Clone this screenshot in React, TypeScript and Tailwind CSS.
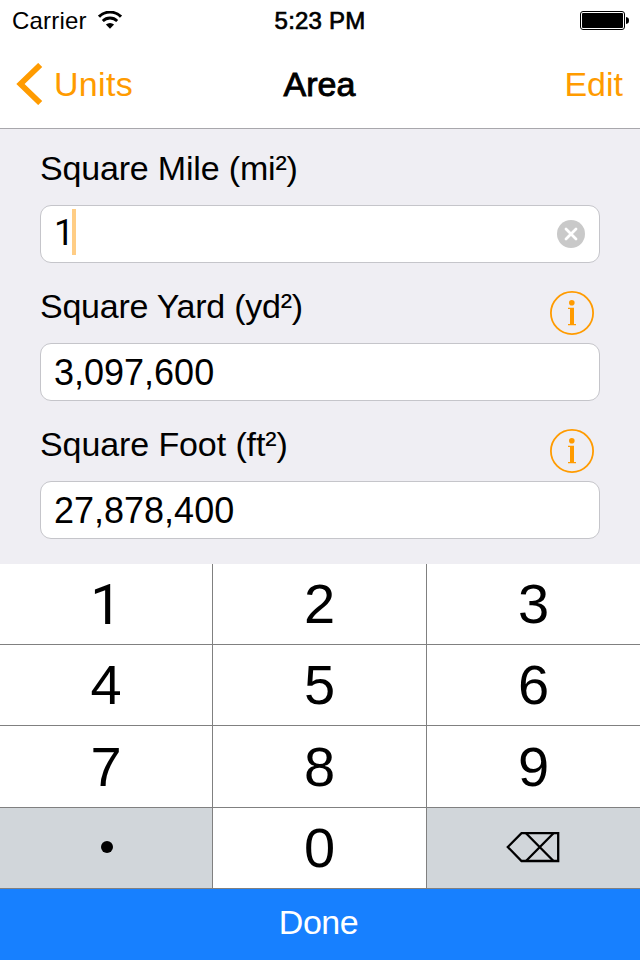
import React from "react";

type Conversion = { name: string; unit: string; value: string; spacing: string; active?: boolean };

const conversions: Conversion[] = [
  { name: "Square Mile", unit: "mi", value: "1", spacing: "tracking-[-0.18px]", active: true },
  { name: "Square Yard", unit: "yd", value: "3,097,600", spacing: "tracking-[-0.25px]" },
  { name: "Square Foot", unit: "ft", value: "27,878,400", spacing: "tracking-[-0.1px]" },
];

function Wifi() {
  return (
    <svg className="ml-[11px] h-[19px] w-6" viewBox="0 0 24 19" fill="none" stroke="#000">
      <path d="M1 5.7 A15.5 15.5 0 0 1 23 5.7" strokeWidth="3" />
      <path d="M4.8 10 A10.2 10.2 0 0 1 19.2 10" strokeWidth="2.8" />
      <path d="M12 17.8 L7.9 13.6 A5.9 5.9 0 0 1 16.1 13.6 Z" fill="#000" stroke="none" />
    </svg>
  );
}

function Battery() {
  return (
    <svg className="h-[19px] w-[49px]" viewBox="0 0 49 19">
      <rect x="0.5" y="0.5" width="44" height="18" rx="2.5" fill="none" stroke="#000" />
      <rect x="2" y="2" width="41" height="15" rx="1" />
      <path d="M46 6 C48.3 6.3 49 7.5 49 9.5 S48.3 12.7 46 13 Z" />
    </svg>
  );
}

function InfoIcon() {
  return (
    <svg className="mt-[5px] mr-1.5 h-11 w-11 shrink-0" viewBox="0 0 44 44">
      <circle cx="22" cy="22" r="21.1" fill="none" stroke="#ff9b00" strokeWidth="1.8" />
      <circle cx="21.8" cy="11.8" r="2.8" fill="#ff9b00" />
      <path d="M18 16.8 H24 V33 H26 V34.2 H18 V33 H20 V18 H18 Z" fill="#ff9b00" />
    </svg>
  );
}

function ClearIcon() {
  return (
    <svg className="ml-auto h-7 w-7" viewBox="0 0 28 28">
      <circle cx="14" cy="14" r="14" fill="#c9c9c9" />
      <path d="M9 9 L19 19 M19 9 L9 19" stroke="#fff" strokeWidth="2.8" strokeLinecap="round" />
    </svg>
  );
}

function DeleteIcon() {
  return (
    <svg className="mr-0.5 mb-0.5 h-8 w-[54px]" viewBox="0 0 54 32" fill="none" stroke="#000" strokeWidth="2.3">
      <path d="M1.8 16 L15.5 2.2 H52.2 V30 H15.5 Z" />
      <path d="M20 2.2 L47.5 30 M47.5 2.2 L20 30" />
    </svg>
  );
}

function Field({ name, unit, value, spacing, active }: Conversion) {
  return (
    <div className="mb-[23px]">
      <div className="flex h-10 items-start justify-between">
        <label className={`text-[34px] leading-10 whitespace-nowrap ${spacing}`}>
          {name} ({unit}
          <span className="inline-block -translate-y-px">²</span>)
        </label>
        {!active && <InfoIcon />}
      </div>
      <div className="mt-[17px] flex h-[58px] items-center rounded-[11px] border border-[#c5c5ca] bg-white pr-3.5 pl-[13px]">
        {active ? (
          <>
            <span className="w-[18px] pb-[3px] text-center font-[Roboto] text-[36px] leading-10">{value}</span>
            <span className="mb-1 h-[46px] w-1 bg-[#ffcd85]" />
            <ClearIcon />
          </>
        ) : (
          <span className="pt-px text-[36px] leading-10">{value}</span>
        )}
      </div>
    </div>
  );
}

function Key({ children, muted }: { children: React.ReactNode; muted?: boolean }) {
  return (
    <button
      className={`flex items-center justify-center text-[56px] leading-none ${muted ? "bg-[#d1d6da]" : "bg-white"}`}
    >
      {children}
    </button>
  );
}

export default function App() {
  return (
    <div className="flex h-[960px] w-[640px] flex-col overflow-hidden bg-[#efeef3] font-['Liberation_Sans',Arial,sans-serif] text-black">
      <header className="h-[129px] border-b border-[#a8a7ac] bg-white">
        <div className="grid h-10 grid-cols-3 items-center pr-[11px] pl-3">
          <div className="flex items-center pt-px text-[24px] leading-6 tracking-[0.2px]">
            Carrier
            <Wifi />
          </div>
          <div className="pt-px pr-px text-center text-[24px] leading-6 tracking-[0.2px] whitespace-nowrap [-webkit-text-stroke:0.7px_#000]">
            5:23 PM
          </div>
          <div className="flex justify-end">
            <Battery />
          </div>
        </div>
        <nav className="grid h-[88px] grid-cols-3 items-center pr-[17px] pl-4 text-[34px] leading-10">
          <button className="flex items-center tracking-[0.3px] text-[#ff9b00]">
            <svg className="mr-[11px] h-[42px] w-[27px]" viewBox="0 0 27 42" fill="none">
              <path d="M24.2 2 L4.5 21 L24.2 40" stroke="#ff9b00" strokeWidth="5.8" />
            </svg>
            Units
          </button>
          <h1 className="text-center [-webkit-text-stroke:0.9px_#000]">Area</h1>
          <button className="text-right text-[#ff9b00]">Edit</button>
        </nav>
      </header>

      <main className="h-[435px] px-10 pt-[19px]">
        {conversions.map((c) => (
          <Field key={c.name} {...c} />
        ))}
      </main>

      <section className="grid h-[325px] grid-cols-[212px_213px_213px] grid-rows-[80px_80px_81px_80px] gap-px border-b border-[#808080] bg-[#808080]">
        <Key><span className="pt-0.5 font-[Roboto]">1</span></Key>
        <Key>2</Key>
        <Key>3</Key>
        <Key>4</Key>
        <Key>5</Key>
        <Key>6</Key>
        <Key>7</Key>
        <Key>8</Key>
        <Key>9</Key>
        <Key muted><span className="mt-[-2px] ml-0.5 h-3 w-3 rounded-full bg-black" /></Key>
        <Key>0</Key>
        <Key muted><DeleteIcon /></Key>
      </section>

      <button className="flex h-[71px] items-center justify-center bg-[#1780ff] pr-[3px] pb-1.5 text-[34px] leading-10 tracking-[-0.5px] text-white">
        Done
      </button>
    </div>
  );
}
